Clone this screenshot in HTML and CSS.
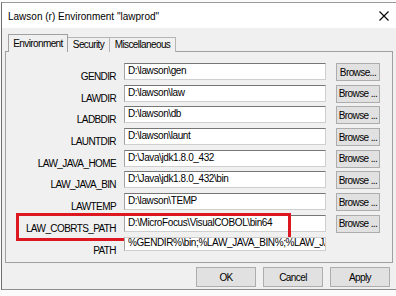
FILE: index.html
```html
<!DOCTYPE html>
<html lang="en">
<head>
    <meta charset="UTF-8">
    <meta name="viewport" content="width=device-width, initial-scale=1.0">
    <title>Lawson (r) Environment "lawprod"</title>
    <link rel="stylesheet" href="styles.css">
</head>
<body>
    <div class="window">
        <div class="titlebar">
            <span class="title">Lawson (r) Environment "lawprod"</span>
            <svg class="close" width="10" height="10" viewBox="0 0 10 10">
                <path d="M0.5 0.5 L9.5 9.5 M9.5 0.5 L0.5 9.5" stroke="#000" stroke-width="1.1" fill="none"/>
            </svg>
        </div>
        <div class="client">
            <div class="tabs">
                <div class="tab active">Environment</div>
                <div class="tab">Security</div>
                <div class="tab">Miscellaneous</div>
            </div>
            <div class="panel">
                <div class="row"><label>GENDIR</label><div class="field">D:\lawson\gen</div><button class="browse">Browse...</button></div>
                <div class="row"><label>LAWDIR</label><div class="field">D:\lawson\law</div><button class="browse">Browse ...</button></div>
                <div class="row"><label>LADBDIR</label><div class="field">D:\lawson\db</div><button class="browse">Browse ...</button></div>
                <div class="row"><label>LAUNTDIR</label><div class="field">D:\lawson\launt</div><button class="browse">Browse ...</button></div>
                <div class="row"><label>LAW_JAVA_HOME</label><div class="field">D:\Java\jdk1.8.0_432</div><button class="browse">Browse ...</button></div>
                <div class="row"><label>LAW_JAVA_BIN</label><div class="field">D:\Java\jdk1.8.0_432\bin</div><button class="browse">Browse ...</button></div>
                <div class="row"><label>LAWTEMP</label><div class="field">D:\lawson\TEMP</div><button class="browse">Browse ...</button></div>
                <div class="row marked"><label>LAW_COBRTS_PATH</label><div class="field">D:\MicroFocus\VisualCOBOL\bin64</div><button class="browse">Browse ...</button><div class="highlight"></div></div>
                <div class="row"><label>PATH</label><div class="field path">%GENDIR%\bin;%LAW_JAVA_BIN%;%LAW_JAV</div></div>
            </div>
            <div class="actions">
                <button class="action">OK</button>
                <button class="action">Cancel</button>
                <button class="action">Apply</button>
            </div>
        </div>
    </div>
</body>
</html>
```

FILE: styles.css
```css
body { margin: 0; background: #fbfbfb; font-family: "Liberation Sans", Arial, sans-serif; font-size: 10px; letter-spacing: -0.6px; color: #000; overflow: hidden; }
.window { margin: 2px 0 0 1px; width: 395px; overflow: hidden; border-top: 1px solid #9a9a9a; border-left: 1px solid #6f6f6f; }
.titlebar { height: 25px; background: #fff; display: flex; align-items: center; padding: 0 8px 0 6px; }
.title { font-size: 10px; letter-spacing: 0; padding-top: 2px; }
.close { margin-left: auto; }
.client { background: #f0f0f0; height: 262px; box-sizing: border-box; padding-top: 7px; border-bottom: 1px solid #8e8e8e; }
.tabs { display: flex; align-items: flex-end; height: 17px; margin-left: 6px; margin-bottom: -1px; }
.tab { height: 14px; line-height: 14px; text-align: center; border: 1px solid #b5b5b5; border-bottom: none; background: #f0f0f0; }
.tab:nth-child(2) { width: 41px; border-left: none; }
.tab:nth-child(3) { width: 65px; border-left: none; }
.tab.active { width: 58px; height: 17px; line-height: 17px; position: relative; z-index: 1; border-color: #a0a0a0; }
.panel { margin-left: 3px; width: 388px; height: 212px; box-sizing: border-box; border: 1px solid #a0a0a0; padding-top: 11px; }
.row { display: flex; align-items: flex-start; height: 17px; margin-bottom: 4.7px; position: relative; }
.row label { width: 110px; text-align: right; line-height: 17px; padding-top: 5px; flex-shrink: 0; }
.field { margin-left: 8px; width: 202px; height: 17px; box-sizing: border-box; background: #fff; border: 1px solid #cfcfcf; border-top-color: #767676; border-left-color: #a3a3a3; padding: 1px 0 0 3px; line-height: 11px; letter-spacing: -0.4px; white-space: nowrap; overflow: hidden; flex-shrink: 0; }
.field.path { height: 14px; padding-top: 0; line-height: 10px; border-top-color: #cfcfcf; }
.browse { margin-left: 10px; width: 44px; height: 18px; padding: 0; font: inherit; letter-spacing: inherit; color: #000; background: #e1e1e1; border: 1px solid #adadad; white-space: nowrap; flex-shrink: 0; }
.highlight { position: absolute; left: 10px; top: -2px; width: 275px; height: 28px; box-sizing: border-box; border: 3px solid #dc1720; }
.actions { display: flex; gap: 7px; padding-left: 194px; margin-top: 4px; }
.action { width: 60px; height: 20px; padding: 0; font: inherit; letter-spacing: inherit; color: #000; background: #e1e1e1; border: 1px solid #adadad; }
```
